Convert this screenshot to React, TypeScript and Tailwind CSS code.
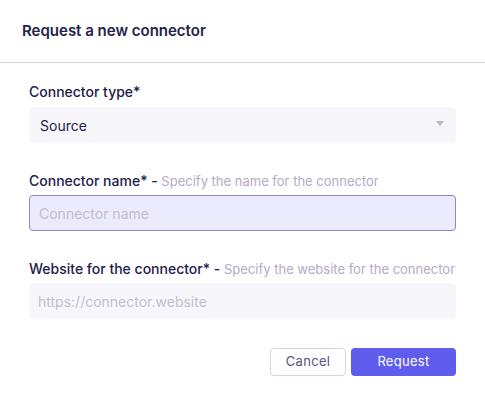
export default function App() {
  return (
    <div className="w-[485px] h-[406px] bg-white font-['Inter',sans-serif] overflow-hidden">
      <div className="h-[63px] flex items-center px-[22px] border-b border-[#d6d3e8]">
        <h1 className="text-[15px] font-semibold text-[#24224a]">Request a new connector</h1>
      </div>

      <div className="px-[29px] pt-[19px]">
        <label className="block text-[14px] font-medium text-[#22204a] leading-[20px]">Connector type*</label>
        <div className="mt-[5px] h-[36px] rounded-[4px] bg-[#f7f7fb] flex items-center justify-between pl-[11px] pr-[12px]">
          <span className="text-[14px] text-[#22204a]">Source</span>
          <svg width="8" height="5" viewBox="0 0 8 5" className="text-[#b9b6c9] -mt-[3px]">
            <path d="M0 0h8L4 5z" fill="currentColor" />
          </svg>
        </div>

        <label className="block mt-[28px] text-[14px] font-medium text-[#22204a] leading-[20px] whitespace-nowrap">
          Connector name* - <span className="text-[13px] font-normal text-[#b5a9c6]">Specify the name for the connector</span>
        </label>
        <div className="mt-[4px] h-[36px] rounded-[4px] bg-[#ecebfd] border border-[#8b88c6] flex items-center px-[9px]">
          <span className="text-[14px] text-[#c5bccf]">Connector name</span>
        </div>

        <label className="block mt-[28px] text-[14px] font-medium text-[#22204a] leading-[20px] whitespace-nowrap">
          Website for the connector* - <span className="text-[13px] font-normal text-[#b5a9c6]">Specify the website for the connector</span>
        </label>
        <div className="mt-[4px] h-[36px] rounded-[4px] bg-[#f7f7fb] flex items-center px-[9px]">
          <span className="text-[14px] text-[#c5bccf]">https://connector.website</span>
        </div>

        <div className="mt-[29px] flex justify-end gap-[5px]">
          <button className="h-[28px] w-[76px] rounded-[4px] border border-[#d6d3e8] bg-white text-[13px] text-[#57537d] tracking-[0.3px]">Cancel</button>
          <button className="h-[28px] w-[105px] rounded-[4px] bg-[#5f5dee] text-[13px] text-white tracking-[0.3px]">Request</button>
        </div>
      </div>
    </div>
  );
}
